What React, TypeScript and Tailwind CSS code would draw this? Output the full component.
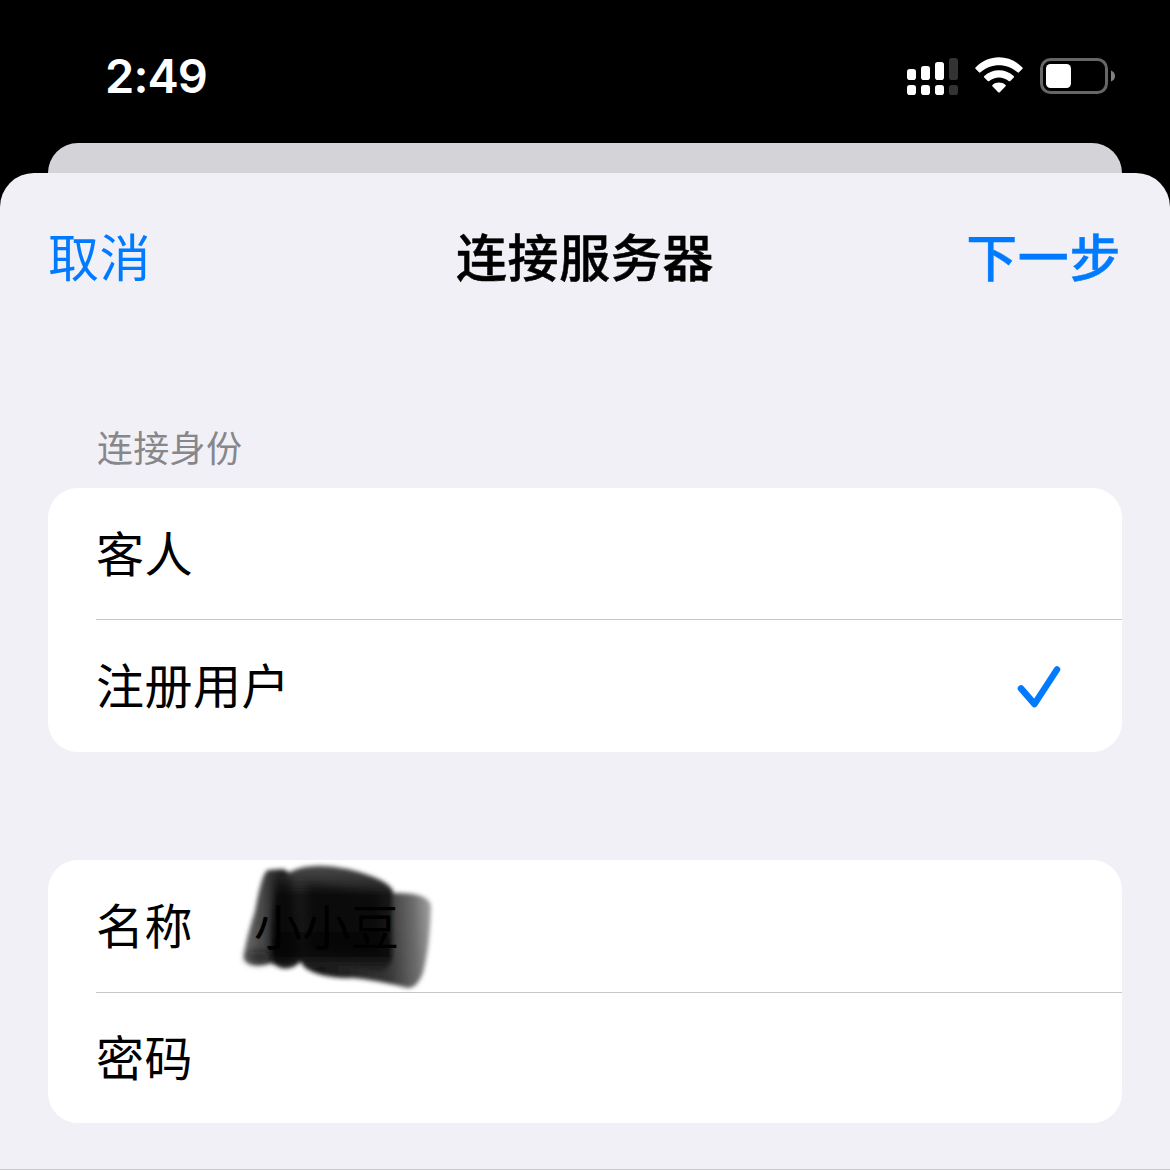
import type { ReactNode } from 'react';

function StatusBar() {
  return (
    <header className="flex h-[143px] items-start justify-between pl-[105px] pr-[54px]">
      <time className="mt-[46px] font-[Inter] text-[47px] font-semibold leading-[60px] tracking-[-0.9px] text-white">2:49</time>
      <div className="mt-[56px] flex items-start">
        <svg className="h-[40px] w-[52px]" viewBox="0 0 52 40" fill="white">
          <rect x="0" y="13" width="9" height="11" rx="2.8" />
          <rect x="14" y="10" width="9" height="14" rx="2.8" />
          <rect x="28" y="6" width="9" height="18" rx="2.8" />
          <rect x="42" y="2" width="9" height="22" rx="2.8" fill="#333" />
          <rect x="0" y="29" width="9" height="10" rx="2.8" />
          <rect x="14" y="29" width="9" height="10" rx="2.8" />
          <rect x="28" y="29" width="9" height="10" rx="2.8" />
          <rect x="42" y="29" width="9" height="10" rx="2.8" fill="#333" />
        </svg>
        <svg className="ml-[16px] h-[40px] w-[50px]" viewBox="0.5 0 50 40" fill="white">
          <path d="M1 12.800Q.4 12.100 1.100 11.500C14-2.100 35-2.100 47.900 11.500Q48.600 12.100 48 12.800L44.500 16.300Q43.800 17 43 16.300C32.500 6.800 16.500 6.800 6 16.300Q5.200 17 4.500 16.300Z" />
          <path d="M9.700 21.500Q9 20.800 9.800 20.100C18 12.200 31 12.200 39.200 20.100Q40 20.800 39.300 21.500L35.800 25Q35 25.700 34.200 25C28.500 20.200 20.500 20.200 14.800 25Q14 25.700 13.200 25Z" />
          <path d="M17.900 30.200Q17.200 29.500 18 28.900C21.700 25.800 27.300 25.800 31 28.900Q31.800 29.500 31.100 30.200L25.300 36.200Q24.500 37 23.700 36.200Z" />
        </svg>
        <svg className="ml-[15px] h-[40px] w-[76px]" viewBox="0 0 76 40">
          <rect x="1.500" y="3.500" width="65" height="33" rx="9" fill="none" stroke="#666" strokeWidth="3" />
          <rect x="6" y="8" width="25" height="24" rx="4.500" fill="white" />
          <path d="M71 14.500Q75 16 75 20T71 25.500Z" fill="#808080" />
        </svg>
      </div>
    </header>
  );
}

function Row({ label, divided, size = 'h-[132px]', children }: { label: string; divided?: boolean; size?: string; children?: ReactNode }) {
  return (
    <div className={`pl-[48px] ${size}`}>
      <div className={`flex h-full items-center pr-[60px] text-[48px] leading-[64px] tracking-[0.5px] text-black ${divided ? 'border-b border-[#c6c6c8]' : ''}`}>
        <span className="whitespace-nowrap pb-[6px]">{label}</span>
        {children}
      </div>
    </div>
  );
}

function Scribble() {
  return (
    <svg className="absolute -left-[24px] -top-[42px] h-[150px] w-[220px]" viewBox="0 0 220 150">
      <defs>
        <filter id="soft" x="-20%" y="-20%" width="140%" height="140%">
          <feGaussianBlur stdDeviation="2.300" />
        </filter>
        <filter id="softer" x="-30%" y="-30%" width="160%" height="160%">
          <feGaussianBlur stdDeviation="4" />
        </filter>
        <linearGradient id="tail" gradientUnits="userSpaceOnUse" x1="90" y1="90" x2="202" y2="84">
          <stop offset="0" stopColor="#181818" />
          <stop offset="0.600" stopColor="#363636" />
          <stop offset="0.850" stopColor="#6c6c6c" />
          <stop offset="1" stopColor="#a0a0a0" />
        </linearGradient>
        <linearGradient id="cap" x1="0" y1="0" x2="0" y2="1">
          <stop offset="0" stopColor="#4c4c4c" />
          <stop offset="0.300" stopColor="#141414" />
          <stop offset="0.850" stopColor="#101010" />
          <stop offset="1" stopColor="#282828" />
        </linearGradient>
        <linearGradient id="edge" x1="0" y1="0" x2="1" y2="0">
          <stop offset="0" stopColor="#6a6a6a" />
          <stop offset="0.500" stopColor="#2a2a2a" />
          <stop offset="1" stopColor="#0a0a0a" />
        </linearGradient>
      </defs>
      <g filter="url(#soft)">
        <path d="M70 35L162 41Q199 40 201 54Q200 94 193 121Q187 136 178 136Q150 129 125 126Q88 127 73 114Z" fill="url(#tail)" />
        <path d="M38 18L53 17L65 24L80 90Q70 118 50 115L41 111Q20 117 14 107Q13 97 25 59Q32 20 38 18Z" fill="url(#edge)" />
        <path d="M60 20Q80 9 118 17Q158 27 163 39L163 108Q156 121 145 120Q112 111 94 114Q79 118 70 110Q63 118 51 116Q40 111 41 97Q40 59 48 30Z" fill="url(#cap)" />
      </g>
      <g filter="url(#softer)">
        <path d="M44 28L60 24L68 100L56 112L42 108Z" fill="#000" opacity="0.550" />
        <path d="M77 32L150 42L151 103Q110 104 78 99Z" fill="#000" opacity="0.500" />
        <ellipse cx="28" cy="105" rx="12" ry="6" fill="#111" opacity="0.600" />
      </g>
    </svg>
  );
}

export default function App() {
  return (
    <main className="flex h-[1170px] w-[1170px] flex-col overflow-hidden bg-black font-['Noto_Sans_CJK_SC',sans-serif]">
      <StatusBar />
      <div className="mx-[48px] h-[30px] shrink-0 rounded-t-[30px] bg-[#d4d3d8]" />
      <section className="h-[997px] shrink-0 rounded-t-[34px] border-b border-[#c9c8cc] bg-[#f1f0f6] px-[48px]">
        <nav className="grid h-[164px] grid-cols-[1fr_auto_1fr] items-center text-[51px] leading-[70px] tracking-[0.6px]">
          <button className="justify-self-start text-[#007aff]">取消</button>
          <h1 className="font-medium text-black [-webkit-text-stroke:0.5px_black]">连接服务器</h1>
          <button className="mr-[1px] justify-self-end font-medium text-[#007aff] [-webkit-text-stroke:0.4px_#007aff]">下一步</button>
        </nav>
        <h2 className="mt-[84px] h-[67px] pl-[49px] text-[36px] leading-[50px] tracking-[0.3px] text-[#87868b]">连接身份</h2>
        <div className="overflow-hidden rounded-[30px] bg-white">
          <Row label="客人" divided />
          <Row label="注册用户">
            <svg className="ml-auto mt-[2px] h-[44px] w-[46px]" viewBox="0 0 46 44" fill="none" stroke="#007aff" strokeWidth="6.500" strokeLinecap="round" strokeLinejoin="round">
              <path d="M5 23.500L18.500 39L41 4.500" />
            </svg>
          </Row>
        </div>
        <div className="mt-[108px] overflow-hidden rounded-[30px] bg-white">
          <Row label="名称" divided size="h-[133px]">
            <div className="relative ml-[61px]">
              <Scribble />
              <span className="relative -top-[2px]">小小豆</span>
            </div>
          </Row>
          <Row label="密码" size="h-[130px]" />
        </div>
      </section>
    </main>
  );
}
